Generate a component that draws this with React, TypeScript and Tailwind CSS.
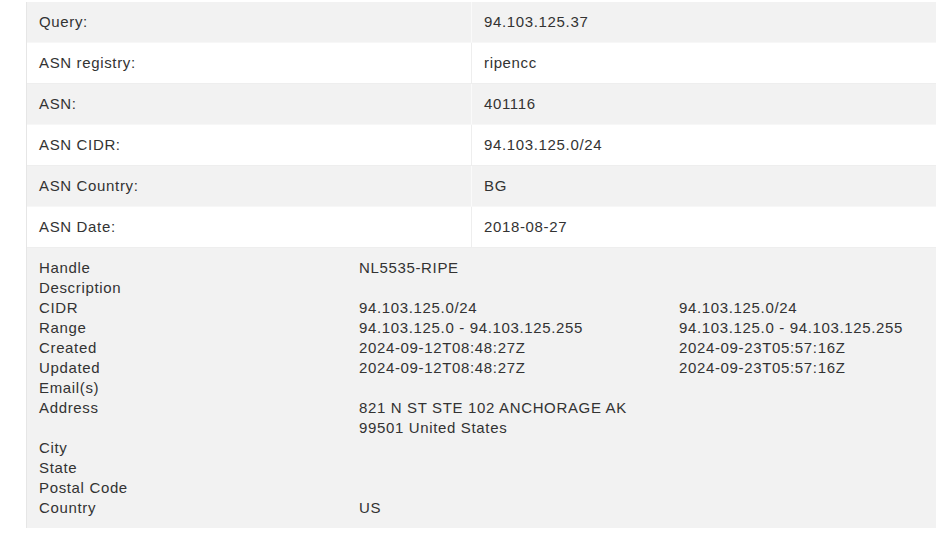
import React from "react";

const top: [string, string][] = [
  ["Query:", "94.103.125.37"],
  ["ASN registry:", "ripencc"],
  ["ASN:", "401116"],
  ["ASN CIDR:", "94.103.125.0/24"],
  ["ASN Country:", "BG"],
  ["ASN Date:", "2018-08-27"],
];

const details: [string, string, string][] = [
  ["Handle", "NL5535-RIPE", ""],
  ["Description", "", ""],
  ["CIDR", "94.103.125.0/24", "94.103.125.0/24"],
  ["Range", "94.103.125.0 - 94.103.125.255", "94.103.125.0 - 94.103.125.255"],
  ["Created", "2024-09-12T08:48:27Z", "2024-09-23T05:57:16Z"],
  ["Updated", "2024-09-12T08:48:27Z", "2024-09-23T05:57:16Z"],
  ["Email(s)", "", ""],
  ["Address", "821 N ST STE 102 ANCHORAGE AK", ""],
  ["", "99501 United States", ""],
  ["City", "", ""],
  ["State", "", ""],
  ["Postal Code", "", ""],
  ["Country", "US", ""],
];

export default function App() {
  return (
    <div
      className="w-[936px] h-[535px] bg-white overflow-hidden pt-[2px] pl-[26px]"
      style={{ fontFamily: '"Liberation Sans", Arial, sans-serif' }}
    >
      <div className="w-[912px] text-[15px] tracking-[0.65px] text-[#333] border-l border-[#e6e6e6]">
        {top.map(([k, v], i) => {
          const gray = i % 2 === 0;
          return (
            <div
              key={k}
              className={`flex h-[41px] items-center border-b ${
                gray ? "bg-[#f2f2f2] border-[#f7f7f7]" : "bg-white border-[#eeeeee]"
              }`}
            >
              <div className="w-[444px] h-full flex items-center pl-[12px]">{k}</div>
              <div
                className={`flex-1 h-full flex items-center pl-[12px] border-l ${
                  gray ? "border-[#fafafa]" : "border-[#eeeeee]"
                }`}
              >
                {v}
              </div>
            </div>
          );
        })}
        <div className="bg-[#f2f2f2] py-[10px] pl-[12px]">
          {details.map(([a, b, c], i) => (
            <div key={i} className="flex h-[20px] items-center leading-[20px]">
              <div className="w-[320px]">{a}</div>
              <div className="w-[320px]">{b}</div>
              <div className="flex-1">{c}</div>
            </div>
          ))}
        </div>
      </div>
    </div>
  );
}
